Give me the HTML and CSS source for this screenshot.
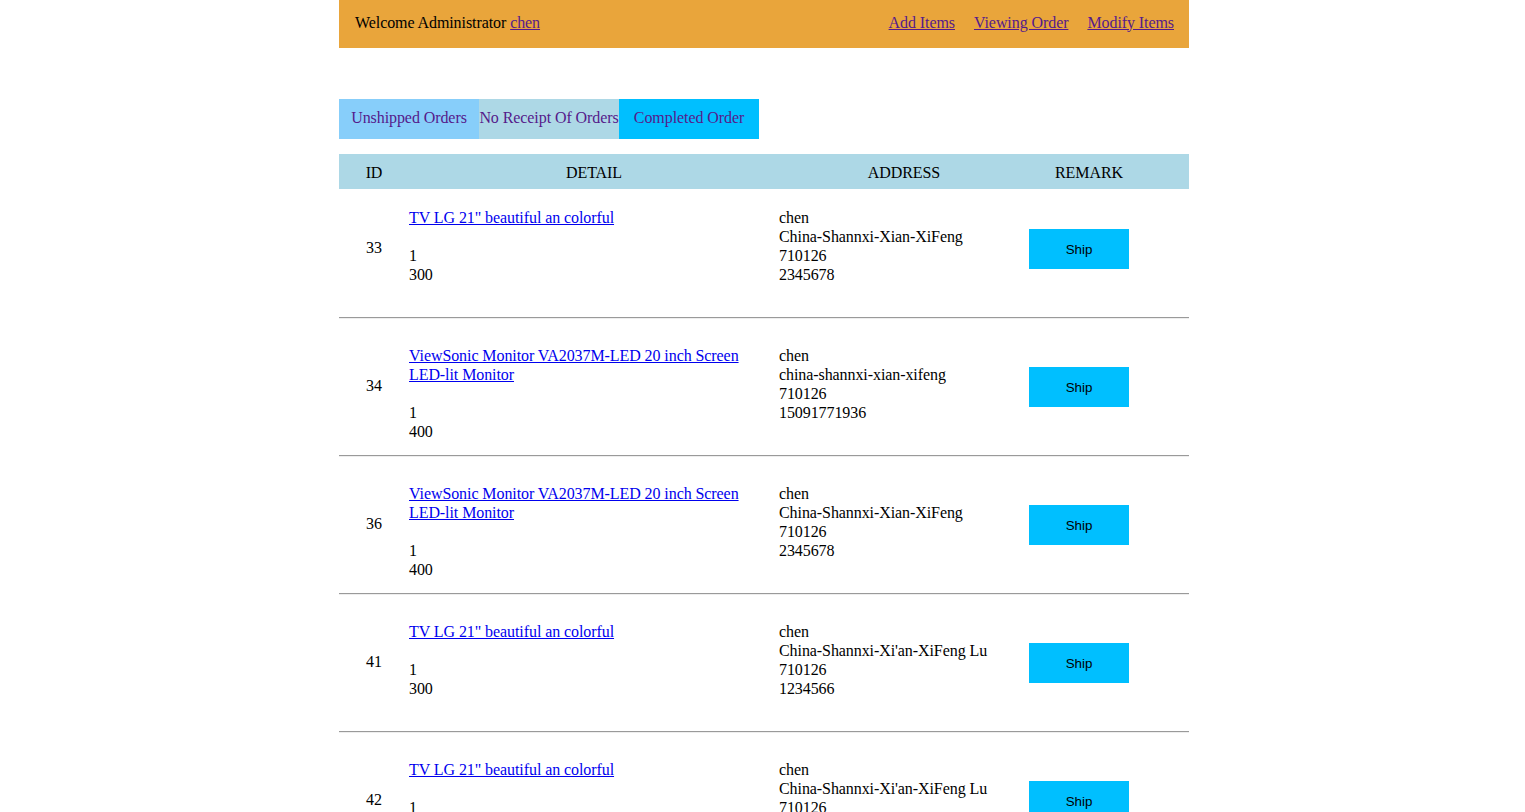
FILE: index.html
```html
<!DOCTYPE html>
<html>
<head>
<meta charset="utf-8">
<title>Orders</title>
<link rel="stylesheet" href="styles.css">
</head>
<body>
<div class="page">
  <div class="topbar">
    <div class="welcome">Welcome Administrator <a class="visited" href="#">chen</a></div>
    <nav class="nav">
      <a class="visited" href="#">Add Items</a>
      <a class="visited" href="#">Viewing Order</a>
      <a class="visited" href="#">Modify Items</a>
    </nav>
  </div>

  <div class="tabs">
    <a class="tab tab-unshipped" href="#">Unshipped Orders</a>
    <a class="tab tab-receipt" href="#">No Receipt Of Orders</a>
    <a class="tab tab-completed" href="#">Completed Order</a>
  </div>

  <div class="table">
    <div class="thead">
      <div class="th">ID</div>
      <div class="th">DETAIL</div>
      <div class="th">ADDRESS</div>
      <div class="th">REMARK</div>
      <div class="th"></div>
    </div>

    <div class="row">
      <div class="cell id">33</div>
      <div class="cell detail"><a href="#">TV LG 21" beautiful an colorful</a><br><br>1<br>300</div>
      <div class="cell addr">chen<br>China-Shannxi-Xian-XiFeng<br>710126<br>2345678</div>
      <div class="cell remark"><button class="ship">Ship</button></div>
      <div class="cell"></div>
    </div>
    <hr>
    <div class="row">
      <div class="cell id">34</div>
      <div class="cell detail"><a href="#">ViewSonic Monitor VA2037M-LED 20 inch Screen LED-lit Monitor</a><br><br>1<br>400</div>
      <div class="cell addr">chen<br>china-shannxi-xian-xifeng<br>710126<br>15091771936</div>
      <div class="cell remark"><button class="ship">Ship</button></div>
      <div class="cell"></div>
    </div>
    <hr>
    <div class="row">
      <div class="cell id">36</div>
      <div class="cell detail"><a href="#">ViewSonic Monitor VA2037M-LED 20 inch Screen LED-lit Monitor</a><br><br>1<br>400</div>
      <div class="cell addr">chen<br>China-Shannxi-Xian-XiFeng<br>710126<br>2345678</div>
      <div class="cell remark"><button class="ship">Ship</button></div>
      <div class="cell"></div>
    </div>
    <hr>
    <div class="row">
      <div class="cell id">41</div>
      <div class="cell detail"><a href="#">TV LG 21" beautiful an colorful</a><br><br>1<br>300</div>
      <div class="cell addr">chen<br>China-Shannxi-Xi'an-XiFeng Lu<br>710126<br>1234566</div>
      <div class="cell remark"><button class="ship">Ship</button></div>
      <div class="cell"></div>
    </div>
    <hr>
    <div class="row">
      <div class="cell id">42</div>
      <div class="cell detail"><a href="#">TV LG 21" beautiful an colorful</a><br><br>1<br>300</div>
      <div class="cell addr">chen<br>China-Shannxi-Xi'an-XiFeng Lu<br>710126<br>1234566</div>
      <div class="cell remark"><button class="ship">Ship</button></div>
      <div class="cell"></div>
    </div>
    <hr>
  </div>
</div>
</body>
</html>
```

FILE: styles.css
```css
html, body {
  margin: 0;
  padding: 0;
  background: #ffffff;
}

body {
  font-family: "Liberation Serif", "Times New Roman", serif;
  font-size: 16px;
  letter-spacing: -0.08px;
  color: #000000;
}

.page {
  width: 850px;
  margin: 0 auto;
  padding-left: 3px;
}

a {
  color: #0000ee;
}

a.visited {
  color: #551a8b;
}

.topbar {
  box-sizing: border-box;
  height: 48px;
  background: #e9a53b;
  display: flex;
  align-items: center;
  justify-content: space-between;
  padding: 0 15px 4px 16px;
  line-height: 19px;
}

.nav {
  display: flex;
  gap: 19px;
}

.tabs {
  margin-top: 51px;
  display: flex;
  height: 40px;
}

.tab {
  box-sizing: border-box;
  width: 140px;
  height: 40px;
  line-height: 38px;
  padding-bottom: 2px;
  text-align: center;
  text-decoration: none;
  color: #551a8b;
  white-space: nowrap;
}

.tab-unshipped { background: #87cefa; }
.tab-receipt { background: #add8e6; }
.tab-completed { background: #00bfff; }

.table {
  margin-top: 15px;
}

.thead {
  box-sizing: border-box;
  display: grid;
  grid-template-columns: 70px 370px 250px 120px 40px;
  height: 35px;
  padding-top: 2px;
  background: #add8e6;
  align-items: center;
}

.th {
  text-align: center;
  line-height: 19px;
}

.row {
  display: grid;
  grid-template-columns: 70px 370px 250px 120px 40px;
  height: 120px;
  line-height: 19px;
}

.cell.id {
  align-self: center;
  text-align: center;
  padding-bottom: 4px;
}

.cell.detail,
.cell.addr {
  padding-top: 19px;
}

.cell.detail {
  padding-right: 20px;
}

.cell.remark {
  align-self: center;
  display: flex;
}

.ship {
  width: 100px;
  height: 40px;
  border: none;
  background: #00bfff;
  color: #000000;
  font-family: "Liberation Sans", Arial, sans-serif;
  font-size: 13.33px;
  letter-spacing: 0;
  padding: 0;
}

hr {
  margin: 8px 0;
  border: 0;
  border-top: 1px solid #9a9a9a;
  border-bottom: 1px solid #eeeeee;
  height: 0;
}
```
